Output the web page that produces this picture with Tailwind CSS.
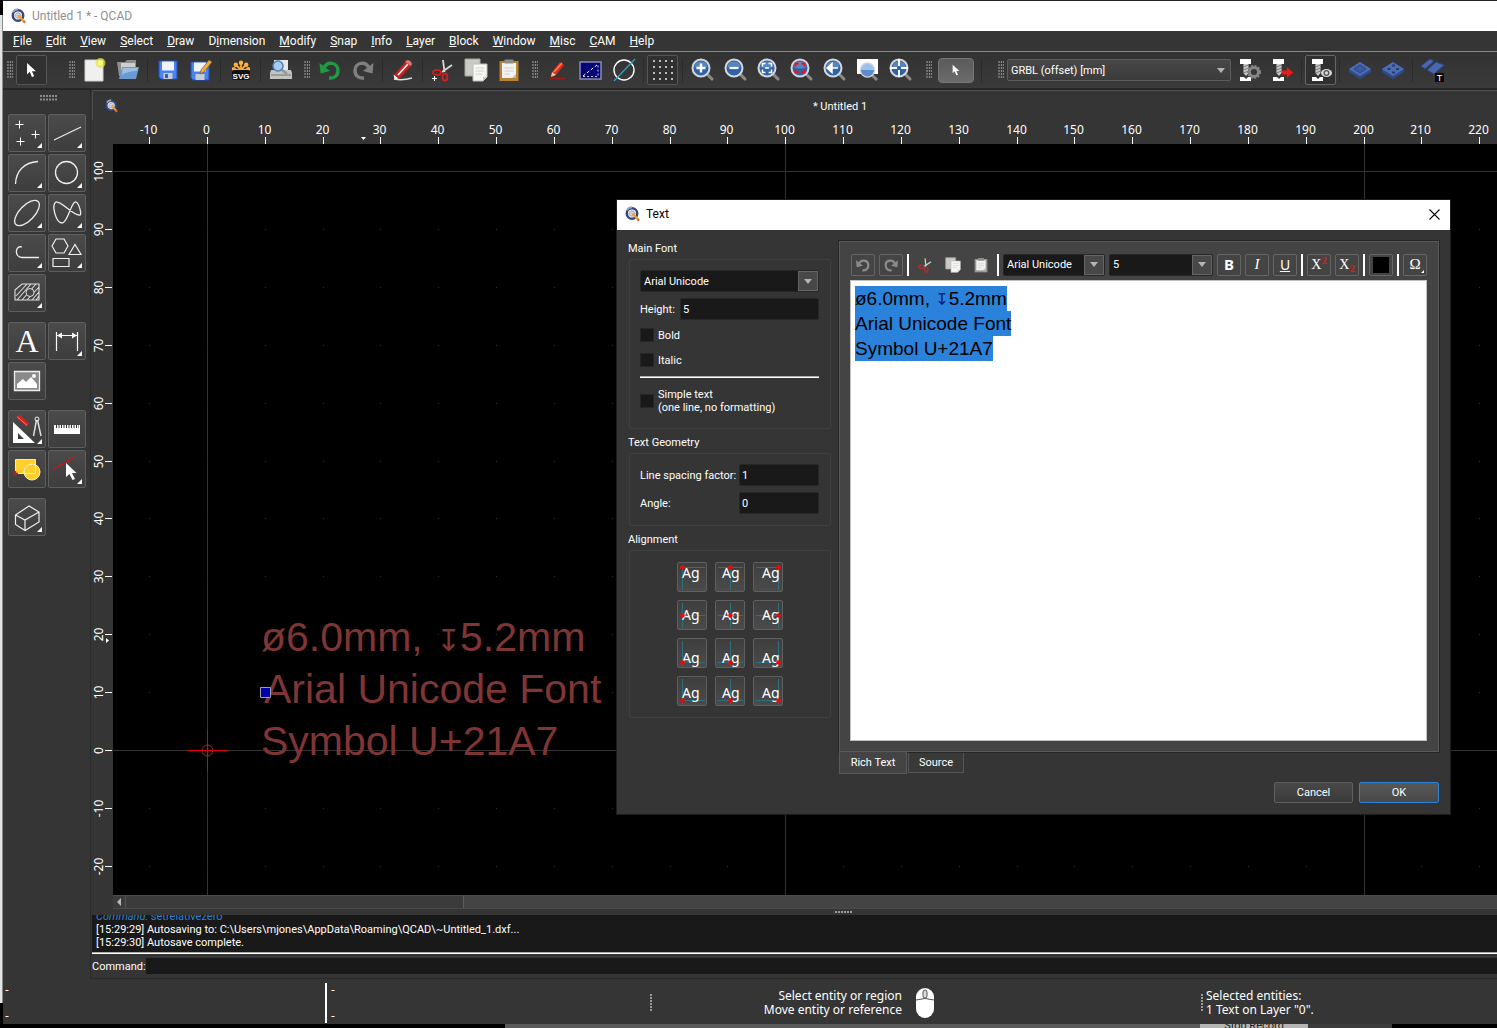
<!DOCTYPE html>
<html lang="en">
  <head>
    <meta charset="UTF-8" />
    <meta name="viewport" content="width=device-width, initial-scale=1.0" />
    <title>Untitled 1 * - QCAD</title>
    <script src="https://cdn.jsdelivr.net/npm/@tailwindcss/browser@4"></script>
  </head>
  <body class="bg-black">
    <!-- shared icon parts -->
    <svg class="hidden">
      <symbol id="logo" viewBox="0 0 16 16">
        <circle cx="7" cy="7.5" r="5.3" fill="#e8e8ee" stroke="#34477f" stroke-width="2.4" />
        <path d="M2 4A6.2 6.2 0 0 1 7 1.3" stroke="#9aa5c8" stroke-width="2" fill="none" />
        <circle cx="7" cy="7.5" r="2.6" fill="none" stroke="#a9a9b5" />
        <path d="M7 3v9M3 7.500h8" stroke="#b9b9c2" stroke-width=".7" />
        <path d="M7.500 7.500l5.500 6" stroke="#f0a030" stroke-width="2.300" />
        <path d="M12.500 13l1.500 1.600" stroke="#d8603a" stroke-width="2.300" />
      </symbol>
      <symbol id="grip" viewBox="0 0 6 18">
        <path d="M1 0v18M3.500 0v18M5.800 0v18" stroke="#8b8b8b" stroke-width="1.300" stroke-dasharray="2 1" />
      </symbol>
      <symbol id="lens" viewBox="0 0 24 24">
        <path d="M16 16l5 5" stroke="#8a8a86" stroke-width="3" stroke-linecap="round" />
        <circle cx="10" cy="10" r="8.500" fill="#2f63a8" stroke="#d4d8da" stroke-width="2" />
        <path d="M3.500 9a6.600 6.600 0 0 1 13 0q-6.500 3-13 0z" fill="#7ba3d2" opacity=".55" />
      </symbol>
      <symbol id="cursor" viewBox="0 0 12 18">
        <path d="M1 1v13l3-3 2.500 6 2.500-1-2.500-5.500h4.500z" fill="#fff" />
      </symbol>
      <symbol id="corner" viewBox="0 0 6 6"><path d="M6 0v6H0z" fill="#fff" /></symbol>
      <symbol id="undo" viewBox="0 0 24 24">
        <path d="M6 10C9 3 20 4 20 12.500C20 18 16 20.500 11 20" fill="none" stroke="currentColor" stroke-width="3.400" />
        <path d="M1.500 5l1 10.500 9.500-2.500z" fill="currentColor" />
      </symbol>
      <symbol id="cut" viewBox="0 0 24 24">
        <path d="M12 2l1.500 12M21 7l-10 7" stroke="#d8d8d8" stroke-width="1.800" />
        <ellipse cx="6" cy="14.500" rx="4" ry="2.300" fill="none" stroke="#d3201f" stroke-width="1.800" />
        <ellipse cx="14" cy="19" rx="2.400" ry="3.600" fill="none" stroke="#d3201f" stroke-width="1.800" />
      </symbol>
      <symbol id="copy" viewBox="0 0 24 24">
        <path d="M1 1h15v17H1z" fill="#c9c9c6" stroke="#a5a5a2" />
        <path d="M9 6h14v13l-4 4H9z" fill="#f7f7f5" stroke="#bdbdb9" />
        <path d="M11.500 10h9M11.500 13h9M11.500 16h7" stroke="#d0d0cc" />
        <path d="M19 23v-4h4z" fill="#c8c8c4" />
      </symbol>
      <symbol id="paste" viewBox="0 0 24 24">
        <path d="M2.500 3h19v20h-19z" fill="currentColor" />
        <path d="M5 5h14v15H5z" fill="#f2f2f0" />
        <path d="M7.500 1.500h9v4h-9z" fill="#8b8d86" />
        <path d="M7.500 10h9M7.500 13h9M7.500 16h5" stroke="#cfcfcb" />
        <path d="M19 20h-4l4-4z" fill="#b9b9b4" />
      </symbol>
      <symbol id="mill" viewBox="0 0 24 24">
        <path d="M3 1h11v5H3z" fill="#fff" />
        <path d="M6.500 6h5v9l-2.500 3-2.500-3z" fill="#c9c9c9" />
        <path d="M6.500 9l5-2M6.500 12l5-2M6.500 15l5-2" stroke="#777" />
        <path d="M3 19h4l2 2 2-2h3v4H3z" fill="#fff" />
      </symbol>
      <symbol id="slab" viewBox="0 0 24 24">
        <path d="M1 11l11-7 11 7v3l-11 7-11-7z" fill="#2d4b8c" />
        <path d="M1 11l11-7 11 7-11 7z" fill="#4c6cb4" />
      </symbol>
      <symbol id="down" viewBox="0 0 8 5"><path d="M0 0h8L4 5z" fill="#b4b4b4" /></symbol>
    </svg>

    <div class="relative flex h-screen w-full overflow-hidden bg-black font-[Roboto,'Noto_Sans',sans-serif] text-[11px] leading-[13px] text-white">
      <!-- sliver of the window behind -->
      <div class="mt-[15px] mb-[25px] w-[3px] shrink-0 border-r border-[#8c8c8c] bg-[#e4e4e4]"></div>

      <div class="flex min-w-0 flex-1 flex-col border-t border-[#222] bg-[#353535]">
        <header class="flex h-[30px] shrink-0 items-center gap-[5px] bg-white pl-2 text-[12px] text-[#8f8f8f]">
          <svg class="size-4"><use href="#logo" /></svg>
          <h1>Untitled 1 * - QCAD</h1>
        </header>

        <nav id="menu" class="flex h-[21px] shrink-0 items-center gap-[14px] border-b border-[#8a8a8a] pl-[10px] text-[12px] whitespace-nowrap">
          <button><u>F</u>ile</button>
          <button><u>E</u>dit</button>
          <button><u>V</u>iew</button>
          <button><u>S</u>elect</button>
          <button><u>D</u>raw</button>
          <button>D<u>i</u>mension</button>
          <button><u>M</u>odify</button>
          <button><u>S</u>nap</button>
          <button><u>I</u>nfo</button>
          <button><u>L</u>ayer</button>
          <button><u>B</u>lock</button>
          <button><u>W</u>indow</button>
          <button><u>M</u>isc</button>
          <button><u>C</u>AM</button>
          <button><u>H</u>elp</button>
        </nav>

        <!-- toolbars -->
        <div class="flex h-[38px] shrink-0 items-center border-b-2 border-[#262626] bg-linear-to-b from-[#323232] to-[#3a3a3a] [&_button]:flex [&_button]:shrink-0 [&_button]:items-center [&_button]:justify-center">
          <div class="flex items-center">
            <svg class="mr-[3px] ml-1 h-[18px] w-[6px]"><use href="#grip" /></svg>
            <button aria-label="Reset" class="h-[30px] w-[31px] rounded-xs border border-[#555] bg-[#303030]"><svg class="h-4 w-[11px]"><use href="#cursor" /></svg></button>
          </div>
          <div class="ml-[22px] flex items-center">
            <svg class="mr-[3px] h-[18px] w-[6px]"><use href="#grip" /></svg>
            <button aria-label="New" class="w-[33px]">
              <svg class="size-6" viewBox="0 0 24 24"><path d="M2 2h18v21H2z" fill="#f0f0ee" stroke="#cfcfcb" /><circle cx="17.500" cy="5" r="5" fill="#e9e53a" opacity=".7" /><circle cx="17.500" cy="5" r="2.500" fill="#ffff8a" /></svg>
            </button>
            <button aria-label="Open" class="w-[33px]">
              <svg class="size-6" viewBox="0 0 24 24"><path d="M1 4h8l2-2h9v16H3z" fill="#8d8f8a" /><path d="M5 5h14v9H5z" fill="#cfcfcc" /><path d="M6 9h17l-3 12H3z" fill="#6a9bd0" /><path d="M6.500 10h15.500l-1 3q-9 0-15 4z" fill="#9bbfe4" /></svg>
            </button>
            <span class="mx-[3px] h-6 w-px bg-[#2b2b2b]"></span>
            <button aria-label="Save" class="w-[33px]">
              <svg class="size-5" viewBox="0 0 20 20"><path d="M1 1h18v18H3l-2-2z" fill="#4a83ea" stroke="#1f4fc4" /><path d="M4 1.500h12v9H4z" fill="#eef3fc" /><path d="M5.500 13h9v6h-9z" fill="#c7cdd8" /><path d="M7 14h3v4H7z" fill="#3060c0" /></svg>
            </button>
            <button aria-label="Save As" class="w-[33px]">
              <svg class="size-[22px]" viewBox="0 0 22 22"><path d="M1 3h18v18H3l-2-2z" fill="#4a83ea" stroke="#1f4fc4" /><path d="M4 3.500h12v9H4z" fill="#eef3fc" /><path d="M5.500 15h9v6h-9z" fill="#c7cdd8" /><path d="M10 15l1-4 8-10 3 2-8 10z" fill="#f0b040" stroke="#7b5a20" stroke-width=".7" /></svg>
            </button>
            <span class="mx-[3px] h-6 w-px bg-[#2b2b2b]"></span>
            <button aria-label="SVG Export" class="w-[33px]">
              <svg class="size-5" viewBox="0 0 20 20"><path d="M10 10V3M10 10L5 5M10 10l5-5M10 10H3M10 10h7" stroke="#ffa62b" stroke-width="1.800" /><g fill="#ffb13b"><circle cx="10" cy="2.800" r="2.200" /><circle cx="4.800" cy="4.800" r="2.200" /><circle cx="15.200" cy="4.800" r="2.200" /><circle cx="2.800" cy="9" r="2" /><circle cx="17.200" cy="9" r="2" /></g><rect x="1" y="10" width="18" height="10" rx="2" fill="#111" /><text x="10" y="18.500" text-anchor="middle" class="fill-white font-['Liberation_Sans',sans-serif] text-[8px] font-bold">SVG</text></svg>
            </button>
            <span class="mx-[3px] h-6 w-px bg-[#2b2b2b]"></span>
            <button aria-label="Print Preview" class="w-[33px]">
              <svg class="size-6" viewBox="0 0 24 24"><path d="M5 2h14v10H5z" fill="#e6e6e4" /><path d="M2 12h20l1 3v6H1v-6z" fill="#c3c3c0" /><path d="M2 17h20" stroke="#777" /><path d="M12 11l6 5" stroke="#999" stroke-width="2.500" /><circle cx="9" cy="8" r="5" fill="#a9cdf0" stroke="#4a82bd" stroke-width="1.500" /></svg>
            </button>
          </div>
          <div class="ml-[7px] flex items-center">
            <svg class="mr-[3px] h-[18px] w-[6px]"><use href="#grip" /></svg>
            <button aria-label="Undo" class="w-[33px] text-[#219a45]"><svg class="size-6"><use href="#undo" /></svg></button>
            <button aria-label="Redo" class="w-[33px] text-[#808080]"><svg class="size-6 -scale-x-100"><use href="#undo" /></svg></button>
            <span class="mx-[3px] h-6 w-px bg-[#2b2b2b]"></span>
            <button aria-label="Delete" class="w-[33px]">
              <svg class="size-6" viewBox="0 0 24 24"><path d="M3 21q8 2 18-1" stroke="#ddd" stroke-width="1.500" fill="none" /><path d="M3 17L14 4l6 4-11 12-5 1z" fill="#c52020" /><path d="M7 17L17 6" stroke="#fff" stroke-width="1.600" /><path d="M2.500 16.500l5 4-4 1z" fill="#eee" /><path d="M14 4l2-2q4 0 5 4l-1 2z" fill="#e87070" /></svg>
            </button>
            <span class="mx-[3px] h-6 w-px bg-[#2b2b2b]"></span>
            <button aria-label="Cut" class="w-[33px]"><svg class="size-6" viewBox="0 0 24 24"><use href="#cut" /><path d="M3.500 18v5M1 20.500h5" stroke="#fff" /></svg></button>
            <button aria-label="Copy" class="w-[33px]"><svg class="size-6"><use href="#copy" /></svg></button>
            <button aria-label="Paste" class="w-[33px] text-[#b98432]"><svg class="size-6"><use href="#paste" /></svg></button>
          </div>
          <div class="ml-[7px] flex items-center">
            <svg class="mr-[3px] h-[18px] w-[6px]"><use href="#grip" /></svg>
            <button aria-label="Pen" class="w-[33px]">
              <svg class="size-5" viewBox="0 0 20 20"><path d="M2 18.500h15" stroke="#a81818" stroke-width="1.500" /><path d="M4 12L12 2l4 3-8 10-5 2z" fill="#e02c1c" /><path d="M6 12l8-9" stroke="#f78a5c" stroke-width="1.300" /><path d="M4 12l4 3-5 2z" fill="#f0c490" /></svg>
            </button>
            <button aria-label="Screen Based Linetypes" class="w-[33px]">
              <svg class="h-[19px] w-[23px]" viewBox="0 0 23 19"><path d="M1 1h21v17H1z" fill="#05057c" stroke="#8a8ab8" stroke-width="1.500" /><path d="M4 15L18 4" stroke="#fff" stroke-dasharray="3 2" /><path d="M4 15.500h15V4" fill="none" stroke="#ccc" stroke-dasharray="2 2" /></svg>
            </button>
            <button aria-label="Draft Mode" class="w-[33px]">
              <svg class="size-6" viewBox="0 0 24 24"><circle cx="12" cy="12" r="10" fill="none" stroke="#fff" stroke-width="1.400" /><path d="M2 23L23 1" stroke="#2ca5c4" stroke-width="1.200" /></svg>
            </button>
            <span class="mx-[3px] h-6 w-px bg-[#2b2b2b]"></span>
            <button aria-label="Grid" class="h-[30px] w-[31px] rounded-xs border border-[#555] bg-[#303030]">
              <svg class="size-[22px]" viewBox="0 0 22 22"><path d="M1 2h21M1 8h21M1 14h21M1 20h21" stroke="#bbb" stroke-width="2" stroke-dasharray="2 4" /></svg>
            </button>
            <span class="mr-[3px] ml-1 h-6 w-px bg-[#2b2b2b]"></span>
            <button aria-label="Zoom In" class="w-[33px]"><svg class="size-6" viewBox="0 0 24 24"><use href="#lens" /><path d="M10 5.500v9M5.500 10h9" stroke="#fff" stroke-width="2.400" /></svg></button>
            <button aria-label="Zoom Out" class="w-[33px]"><svg class="size-6" viewBox="0 0 24 24"><use href="#lens" /><path d="M5.500 10h9" stroke="#fff" stroke-width="2.200" /></svg></button>
            <button aria-label="Auto Zoom" class="w-[33px]"><svg class="size-6" viewBox="0 0 24 24"><use href="#lens" /><path d="M5.500 8.500v-3h3M11.500 5.500h3v3M14.500 11.500v3h-3M8.500 14.500h-3v-3M8 10h4" fill="none" stroke="#fff" stroke-width="1.500" /></svg></button>
            <button aria-label="Zoom to Selection" class="w-[33px]"><svg class="size-6" viewBox="0 0 24 24"><use href="#lens" /><path d="M5.500 8.500v-3h3M11.500 5.500h3v3M14.500 11.500v3h-3M8.500 14.500h-3v-3" fill="none" stroke="#f01020" stroke-width="2" /></svg></button>
            <button aria-label="Previous View" class="w-[33px]"><svg class="size-6" viewBox="0 0 24 24"><use href="#lens" /><path d="M4 10l5-4.500v9zM8 10h7" fill="#fff" stroke="#fff" stroke-width="1.500" /></svg></button>
            <button aria-label="Window Zoom" class="w-[33px]"><svg class="size-6" viewBox="0 0 24 24"><path d="M1 1h21v15H1z" fill="#fff" /><path d="M16 17l5 5" stroke="#8a8a86" stroke-width="3" /><circle cx="11.500" cy="12" r="7" fill="#9cc1ea" stroke="#d0d4d8" stroke-width="1.500" /><path d="M5 12h13a6.500 6.500 0 0 1-13 0z" fill="#5b8dcb" /></svg></button>
            <button aria-label="Pan" class="w-[33px]"><svg class="size-6" viewBox="0 0 24 24"><use href="#lens" /><path d="M10 1v18M1 10h18" stroke="#fff" stroke-width="2" /><path d="M8 10h4M10 8v4" stroke="#2f63a8" stroke-width="2.200" /></svg></button>
          </div>
          <div class="ml-[9px] flex items-center">
            <svg class="mr-[6px] h-[18px] w-[6px]"><use href="#grip" /></svg>
            <button aria-label="Selection" class="h-[25px] w-9 rounded border border-[#777] bg-linear-to-b from-[#5a5a5a] to-[#6c6c6c]"><svg class="h-3 w-2"><use href="#cursor" /></svg></button>
            <span class="mr-[3px] ml-[7px] h-6 w-px bg-[#2b2b2b]"></span>
          </div>
          <div class="ml-[13px] flex items-center">
            <svg class="mr-[3px] h-[18px] w-[6px]"><use href="#grip" /></svg>
            <div class="mr-px flex h-[22px] w-[224px] items-center rounded-xs border border-[#5c5c5c] bg-linear-to-b from-[#484848] to-[#3b3b3b] pr-[5px]">
              <select aria-label="CAM configuration" class="min-w-0 flex-1 appearance-none pl-[3px] outline-none"><option>GRBL (offset) [mm]</option></select>
              <svg class="h-[5px] w-2"><use href="#down" /></svg>
            </div>
            <button aria-label="CAM Settings" class="w-[33px]"><svg class="size-6" viewBox="0 0 24 24"><use href="#mill" /><circle cx="17" cy="14" r="4.500" fill="none" stroke="#858585" stroke-width="3" /><circle cx="17" cy="14" r="6" fill="none" stroke="#858585" stroke-width="2" stroke-dasharray="2 1.500" /></svg></button>
            <button aria-label="CAM Export" class="w-[33px]"><svg class="size-6" viewBox="0 0 24 24"><use href="#mill" /><path d="M12 12.500h5v-3.500l6 5.500-6 5.500v-3.500h-5z" fill="#f01818" /></svg></button>
            <span class="mx-[3px] h-6 w-px bg-[#2b2b2b]"></span>
            <button aria-label="CAM Simulation" class="h-[30px] w-[31px] rounded-xs border border-[#666] bg-[#303030]"><svg class="size-6" viewBox="0 0 24 24"><use href="#mill" /><ellipse cx="17.500" cy="15" rx="5.500" ry="4" fill="#d8d8d8" /><circle cx="17.500" cy="15" r="2.300" fill="none" stroke="#555" stroke-width="1.300" /></svg></button>
            <span class="mx-[3px] h-6 w-px bg-[#2b2b2b]"></span>
            <button aria-label="Pocket" class="w-[33px]"><svg class="size-6" viewBox="0 0 24 24"><use href="#slab" /><path d="M6 11l6-4 6 4-6 4z" fill="#3c5ba2" stroke="#27437f" /></svg></button>
            <button aria-label="Drill" class="w-[33px]"><svg class="size-6" viewBox="0 0 24 24"><use href="#slab" /><path d="M11 7.500h3M6.500 11h3M15 11h3M11 14.500h3" stroke="#263c74" stroke-width="2" /></svg></button>
            <span class="mx-[3px] h-6 w-px bg-[#2b2b2b]"></span>
            <button aria-label="Toolpath Text" class="w-[33px]"><svg class="size-6" viewBox="0 0 24 24"><path d="M0 8L9 1l4 2-9 8zM6 12l9-8 8 3-10 9z" fill="#4a68b0" stroke="#2c4686" /><path d="M14 15h9v9h-9z" fill="#0a0a0a" /><text x="18.500" y="22.500" text-anchor="middle" class="fill-white font-['Liberation_Sans',sans-serif] text-[9px]">T</text></svg></button>
          </div>
        </div>

        <div class="flex min-h-0 flex-1">
          <!-- tool palette -->
          <aside class="flex w-[88px] shrink-0 flex-col gap-[10px] border-r border-[#2a2a2a] pl-[5px] [&_button]:relative [&_button]:flex [&_button]:size-[38px] [&_button]:items-center [&_button]:justify-center [&_button]:rounded-xs [&_button]:border [&_button]:border-[#5e5e5e] [&_button]:bg-linear-to-b [&_button]:from-[#4b4b4b] [&_button]:to-[#3d3d3d]">
            <svg class="mt-[5px] mb-[3px] h-[6px] w-[18px] self-center" viewBox="0 0 18 6"><path d="M0 1h18M0 4.500h18" stroke="#8b8b8b" stroke-width="2" stroke-dasharray="2 1" /></svg>
            <div class="grid w-[78px] grid-cols-2 gap-[2px]">
              <button aria-label="Point Tools"><svg class="size-8" viewBox="0 0 32 32"><path d="M4.500 7.500h8M8.500 3.500v8M20.500 17.500h8M24.500 13.500v8M5.500 24.500h8M9.500 20.500v8" stroke="#fff" /></svg><svg class="absolute right-[3px] bottom-[3px] size-[5px]"><use href="#corner" /></svg></button>
              <button aria-label="Line Tools"><svg class="size-8" viewBox="0 0 32 32"><path d="M3 23L30 10" stroke="#eee" stroke-width="1.200" /></svg><svg class="absolute right-[3px] bottom-[3px] size-[5px]"><use href="#corner" /></svg></button>
              <button aria-label="Arc Tools"><svg class="size-8" viewBox="0 0 32 32"><path d="M4.500 27C5 14 13 5.500 27 4.500" fill="none" stroke="#eee" stroke-width="1.300" /></svg><svg class="absolute right-[3px] bottom-[3px] size-[5px]"><use href="#corner" /></svg></button>
              <button aria-label="Circle Tools"><svg class="size-8" viewBox="0 0 32 32"><circle cx="15.500" cy="15.500" r="11" fill="none" stroke="#eee" stroke-width="1.300" /></svg><svg class="absolute right-[3px] bottom-[3px] size-[5px]"><use href="#corner" /></svg></button>
              <button aria-label="Ellipse Tools"><svg class="size-8" viewBox="0 0 32 32"><ellipse cx="16" cy="16" rx="16" ry="7.500" transform="rotate(-46 16 16)" fill="none" stroke="#eee" stroke-width="1.300" /></svg><svg class="absolute right-[3px] bottom-[3px] size-[5px]"><use href="#corner" /></svg></button>
              <button aria-label="Spline Tools"><svg class="size-8" viewBox="0 0 32 32"><path d="M5 5C0 8 5 26 11 26C17 26 20 4 25 5C28 6 32 20 28 18C22 18 10 4 5 5z" fill="none" stroke="#eee" stroke-width="1.300" /></svg><svg class="absolute right-[3px] bottom-[3px] size-[5px]"><use href="#corner" /></svg></button>
              <button aria-label="Polyline Tools"><svg class="size-8" viewBox="0 0 32 32"><path d="M11 10C4 8 3 20 11 20.500H28" fill="none" stroke="#eee" stroke-width="1.300" /></svg><svg class="absolute right-[3px] bottom-[3px] size-[5px]"><use href="#corner" /></svg></button>
              <button aria-label="Shape Tools"><svg class="size-8" viewBox="0 0 32 32"><path d="M5 2h8l4 7-4 7H5L1 9zM18 17.500l6-10 6 10zM2 21.500h16v8H2z" fill="none" stroke="#eee" stroke-width="1.200" /></svg><svg class="absolute right-[3px] bottom-[3px] size-[5px]"><use href="#corner" /></svg></button>
              <button aria-label="Hatch"><svg class="size-8" viewBox="0 0 32 32"><path d="M4 13l7-6h17v16H4zM5 19L16 7M6 23L20 7M11 23L25 7M16 23L28 10M21 23l7-8M25 23l3-4" fill="none" stroke="#ddd" stroke-width="1.100" /><circle cx="19" cy="15.500" r="4" fill="#454545" stroke="#ddd" /></svg><svg class="absolute right-[3px] bottom-[3px] size-[5px]"><use href="#corner" /></svg></button>
            </div>
            <div class="grid w-[78px] grid-cols-2 gap-[2px]">
              <button aria-label="Text" class="font-['Liberation_Serif',serif] text-[32px] leading-8">A</button>
              <button aria-label="Dimension Tools"><svg class="size-8" viewBox="0 0 32 32"><path d="M5.500 7v19M26.500 7v19M6 10.500h20" stroke="#fff" stroke-width="1.200" /><path d="M6 10.500l5-3v6zM26 10.500l-5-3v6z" fill="#fff" /></svg><svg class="absolute right-[3px] bottom-[3px] size-[5px]"><use href="#corner" /></svg></button>
              <button aria-label="Insert Bitmap"><svg class="size-8" viewBox="0 0 32 32"><path d="M3.500 6.500h25v19h-25z" fill="#8a8a8a" stroke="#eee" stroke-width="1.300" /><path d="M6 23v-4l6-5 3 3 5-5 6 7v4z" fill="#fff" /><circle cx="23" cy="11" r="2" fill="#fff" /></svg></button>
            </div>
            <div class="grid w-[78px] grid-cols-2 gap-[2px]">
              <button aria-label="Modify Tools"><svg class="size-8" viewBox="0 0 32 32"><path d="M2 9v21h22zM7 20l6 6H7z" fill="#fff" fill-rule="evenodd" /><path d="M7 3l10 9" stroke="#d82020" stroke-width="4" /><path d="M6 3.500l10 9" stroke="#f39080" stroke-width=".8" /><path d="M25.500 7l-3 16M26.500 7l3.500 16" stroke="#ddd" stroke-width="1.500" /><circle cx="26" cy="6" r="2" fill="none" stroke="#eee" /></svg><svg class="absolute right-[3px] bottom-[3px] size-[5px]"><use href="#corner" /></svg></button>
              <button aria-label="Measure Tools"><svg class="size-8" viewBox="0 0 32 32"><path d="M3 12h26v9H3z" fill="#fff" /><path d="M5 13.500h23" stroke="#333" stroke-width="3" stroke-dasharray="1 1.500" /></svg></button>
              <button aria-label="Block Tools"><svg class="size-8" viewBox="0 0 32 32"><path d="M4.500 6.500h20v14h-20z" fill="#ffcf2e" stroke="#ffe9a0" /><circle cx="21" cy="19" r="8" fill="#ffcf2e" stroke="#fff0b8" /><path d="M24.500 11v9.500H13" fill="none" stroke="#fff0b8" /><path d="M4.500 18v5M2 20.500h5" stroke="#f00" stroke-width="1.500" /></svg></button>
              <button aria-label="Snap Tools"><svg class="size-8" viewBox="0 0 32 32"><path d="M3 16L24 4" stroke="#e01010" stroke-width="1.300" /><path d="M15 10v14l3.500-3 3 6 2.500-1-3-6h4.500z" fill="#fff" /></svg><svg class="absolute right-[3px] bottom-[3px] size-[5px]"><use href="#corner" /></svg></button>
            </div>
            <div class="grid w-[78px] grid-cols-2 gap-[2px]">
              <button aria-label="Projection Tools"><svg class="size-8" viewBox="0 0 32 32"><path d="M4.500 14L18 5l10 6v10L14 29.500l-9.500-6zM4.500 14l9.500 5 14-8M14 19v10.500" fill="none" stroke="#eee" stroke-width="1.200" /></svg><svg class="absolute right-[3px] bottom-[3px] size-[5px]"><use href="#corner" /></svg></button>
            </div>
          </aside>

          <div class="flex min-w-0 flex-1 flex-col">
            <!-- document tab -->
            <div class="ml-px flex h-[30px] shrink-0 items-center rounded-tl-xs border-t border-l border-[#505050]">
              <svg class="ml-3 size-[14px]"><use href="#logo" /></svg>
              <h2 class="flex-1 pt-px pl-16 text-center">* Untitled 1</h2>
            </div>
            <div class="flex h-6 shrink-0 pl-[22px]">
              <svg id="ruler-x" class="h-6 min-w-0 flex-1 overflow-visible font-['Noto_Sans',sans-serif] text-[12px]"></svg>
            </div>
            <div class="flex min-h-0 flex-1">
              <svg id="ruler-y" class="h-full w-[22px] shrink-0 font-['Noto_Sans',sans-serif] text-[12px]"></svg>
              <svg id="canvas" class="h-full min-w-0 flex-1 bg-black font-['Liberation_Sans',Arial,sans-serif] text-[41px]">
                <g id="grid"></g>
                <g fill="#7f3535">
                  <text x="148" y="507">ø6.0mm,</text>
                  <text x="323" y="507" class="font-['DejaVu_Sans',sans-serif] text-[30px]">↧</text>
                  <text x="347" y="507">5.2mm</text>
                  <text x="151" y="559">Arial Unicode Font</text>
                  <text x="148" y="611">Symbol U+21A7</text>
                </g>
                <path d="M147.500 543.500h10v10h-10z" fill="#0000a8" stroke="#a0a0a0" />
                <path d="M74 606.500h41M94.500 586v42" stroke="#e00000" />
                <circle cx="94.500" cy="606.500" r="5.500" fill="none" stroke="#c02020" />
              </svg>
            </div>
            <div class="ml-[22px] flex h-[14px] shrink-0 border-y border-[#4a4a4a] bg-[#3b3b3b]">
              <button aria-label="Scroll left" class="flex w-[13px] items-center justify-center border-r border-[#555]"><svg class="h-2 w-1" viewBox="0 0 4 8"><path d="M4 0v8L0 4z" fill="#bbb" /></svg></button>
              <span class="w-[337px] shrink-0"></span>
              <span class="flex-1 border-l border-[#5e5e5e] bg-[#444]"></span>
            </div>
            <div class="flex h-[6px] shrink-0 items-center justify-center pl-[99px]">
              <svg class="h-[2px] w-[18px]" viewBox="0 0 18 2"><path d="M0 1h18" stroke="#9a9a9a" stroke-width="2" stroke-dasharray="2 1" /></svg>
            </div>

            <!-- command line -->
            <div class="ml-px flex h-[37px] shrink-0 flex-col justify-end overflow-hidden bg-[#191919] pb-[3px] pl-1">
              <p class="text-[#2a82da]"><i>Command:</i> setrelativezero</p>
              <p>[15:29:29] Autosaving to: C:\Users\mjones\AppData\Roaming\QCAD\~Untitled_1.dxf...</p>
              <p>[15:29:30] Autosave complete.</p>
            </div>
            <div class="ml-px h-[2px] shrink-0 border-t border-[#aaa] bg-white"></div>
            <div class="flex h-[25px] shrink-0 items-center border-b border-[#2a2a2a] pl-px">
              <label for="command" class="w-[54px]">Command:</label>
              <input id="command" class="h-4 min-w-0 flex-1 bg-[#191919] outline-none" />
            </div>
          </div>
        </div>

        <!-- status bar -->
        <footer class="flex h-[45px] shrink-0 items-center pt-[2px] font-['Noto_Sans',sans-serif] text-[12px] leading-[14px]">
          <div class="flex h-10 w-[322px] flex-col justify-between pl-[2px]"><span>-</span><span>-</span></div>
          <div class="flex h-10 w-[325px] flex-col justify-between border-l-2 border-white pl-1"><span>-</span><span>-</span></div>
          <svg class="h-[18px] w-[2px]" viewBox="0 0 2 18"><path d="M1 0v18" stroke="#999" stroke-width="2" stroke-dasharray="2 1" /></svg>
          <p class="w-[251px] pr-px text-right">Select entity or region<br />Move entity or reference</p>
          <svg class="ml-3 h-8 w-5" viewBox="0 0 20 32"><rect x="1" y="1" width="18" height="30" rx="9" fill="#fff" /><path d="M1 13q9-3 18 0" stroke="#555" fill="none" /><rect x="8" y="3" width="4" height="8" rx="2" fill="#ddd" stroke="#555" /></svg>
          <svg class="ml-[266px] h-[18px] w-[2px]" viewBox="0 0 2 18"><path d="M1 0v18" stroke="#999" stroke-width="2" stroke-dasharray="2 1" /></svg>
          <p class="pl-[3px]">Selected entities:<br />1 Text on Layer "0".</p>
        </footer>
        <div class="flex h-1 shrink-0 overflow-hidden bg-black leading-1">
          <span class="ml-[502px] w-[695px] bg-[#5a5a5a]"></span>
          <span class="w-[108px] bg-[#b5b5b5] text-center text-[#222]">Stop Record</span>
          <span class="w-[84px] bg-[#3c3c3c]"></span>
        </div>
      </div>

      <!-- text dialog -->
      <div role="dialog" aria-label="Text" class="absolute top-[200px] left-[617px] flex w-[833px] flex-col bg-[#353535] shadow-[0_0_0_1px_#1c1c1c]">
        <header class="flex h-[30px] items-center bg-white pr-[10px] pb-[2px] pl-2 text-[12px] text-black">
          <svg class="size-4"><use href="#logo" /></svg>
          <h2 class="ml-[5px] flex-1">Text</h2>
          <button aria-label="Close"><svg class="size-[11px]" viewBox="0 0 11 11"><path d="M.5.5l10 10M10.500.5l-10 10" stroke="#000" stroke-width="1.100" /></svg></button>
        </header>

        <div class="flex gap-2 pt-[11px] pr-[11px] pl-[11px]">
          <div class="flex w-[203px] shrink-0 flex-col">
            <h3 class="mt-px">Main Font</h3>
            <div class="mt-1 ml-px flex h-[170px] flex-col rounded-xs border border-[#404040] pt-[10px] pr-[11px] pl-[10px]">
              <div class="flex h-[22px] overflow-hidden rounded-xs border border-[#262626] bg-[#191919]">
                <select aria-label="Font" class="min-w-0 flex-1 appearance-none pl-[3px] outline-none"><option>Arial Unicode</option></select>
                <span class="flex w-5 items-center justify-center border border-[#666] bg-[#484848]"><svg class="h-[5px] w-2"><use href="#down" /></svg></span>
              </div>
              <div class="mt-[6px] flex items-center">
                <label for="height" class="flex-1">Height:</label>
                <input id="height" value="5" class="h-[22px] w-[139px] rounded-xs border border-[#262626] bg-[#191919] pl-[2px] outline-none" />
              </div>
              <label class="mt-2 flex items-center gap-1"><input type="checkbox" class="size-[14px] appearance-none border border-[#262626] bg-[#191919]" />Bold</label>
              <label class="mt-[11px] flex items-center gap-1"><input type="checkbox" class="size-[14px] appearance-none border border-[#262626] bg-[#191919]" />Italic</label>
              <hr class="mt-[9px] h-[2px] border-t border-[#aaa] bg-white" />
              <label class="mt-[10px] flex items-center gap-1"><input type="checkbox" class="size-[14px] appearance-none border border-[#262626] bg-[#191919]" /><span>Simple text<br />(one line, no formatting)</span></label>
            </div>
            <h3 class="mt-[7px]">Text Geometry</h3>
            <div class="mt-1 ml-px flex h-[73px] flex-col gap-[6px] rounded-xs border border-[#404040] pt-[10px] pr-[11px] pl-[10px]">
              <div class="flex items-center">
                <label for="spacing" class="flex-1 whitespace-nowrap">Line spacing factor:</label>
                <input id="spacing" value="1" class="h-[22px] w-20 rounded-xs border border-[#262626] bg-[#191919] pl-[2px] outline-none" />
              </div>
              <div class="flex items-center">
                <label for="angle" class="flex-1">Angle:</label>
                <input id="angle" value="0" class="h-[22px] w-20 rounded-xs border border-[#262626] bg-[#191919] pl-[2px] outline-none" />
              </div>
            </div>
            <h3 class="mt-[7px]">Alignment</h3>
            <div id="alignment" class="mt-1 ml-px grid h-[168px] grid-cols-[repeat(3,30px)] content-center justify-center gap-2 rounded-xs border border-[#404040]"></div>
          </div>

          <div class="flex min-w-0 flex-1 flex-col">
            <div class="flex flex-col border border-[#5a5a5a] bg-[#444] pt-[11px] pr-[11px] pb-[10px] pl-[10px] shadow-[0_0_0_1px_#262626]">
              <div class="flex h-[23px] items-center gap-1 pl-px [&_button]:flex [&_button]:h-[22px] [&_button]:w-6 [&_button]:items-center [&_button]:justify-center [&_button]:rounded-xs">
                <button aria-label="Undo" class="border border-[#666] text-[#8b8b8b]"><svg class="size-4"><use href="#undo" /></svg></button>
                <button aria-label="Redo" class="border border-[#666] text-[#8b8b8b]"><svg class="size-4 -scale-x-100"><use href="#undo" /></svg></button>
                <span class="h-[22px] w-[2px] bg-white"></span>
                <button aria-label="Cut"><svg class="size-4"><use href="#cut" /></svg></button>
                <button aria-label="Copy"><svg class="size-4"><use href="#copy" /></svg></button>
                <button aria-label="Paste" class="text-[#9a9a96]"><svg class="size-4"><use href="#paste" /></svg></button>
                <span class="h-[22px] w-[2px] bg-white"></span>
                <div class="flex h-[22px] w-[102px] overflow-hidden rounded-xs border border-[#262626] bg-[#191919]">
                  <select aria-label="Text font" class="min-w-0 flex-1 appearance-none pl-[3px] outline-none"><option>Arial Unicode</option></select>
                  <span class="flex w-5 items-center justify-center border border-[#666] bg-[#484848]"><svg class="h-[5px] w-2"><use href="#down" /></svg></span>
                </div>
                <div class="flex h-[22px] min-w-0 flex-1 overflow-hidden rounded-xs border border-[#262626] bg-[#191919]">
                  <select aria-label="Text size" class="min-w-0 flex-1 appearance-none pl-[3px] outline-none"><option>5</option></select>
                  <span class="flex w-5 items-center justify-center border border-[#666] bg-[#484848]"><svg class="h-[5px] w-2"><use href="#down" /></svg></span>
                </div>
                <button class="border border-[#666] font-['Noto_Sans',sans-serif] text-[15px] font-bold">B</button>
                <button class="border border-[#666] font-['Liberation_Serif',serif] text-[15px] italic">I</button>
                <button class="border border-[#666] font-['Noto_Sans',sans-serif] text-[14px] underline">U</button>
                <span class="h-[22px] w-[2px] bg-white"></span>
                <button class="border border-[#666] font-['Liberation_Serif',serif] text-[14px]"><span>X<sup class="text-[11px] font-bold text-[#f01010]">2</sup></span></button>
                <button class="border border-[#666] font-['Liberation_Serif',serif] text-[14px]"><span>X<sub class="text-[11px] font-bold text-[#f01010]">2</sub></span></button>
                <span class="h-[22px] w-[2px] bg-white"></span>
                <button aria-label="Text color" class="border border-[#666]"><span class="size-4 bg-black"></span></button>
                <span class="h-[22px] w-[2px] bg-white"></span>
                <button class="relative border border-[#666] font-['Liberation_Serif',serif] text-[15px]">Ω<svg class="absolute right-[2px] bottom-[2px] size-[3px]"><use href="#corner" /></svg></button>
              </div>
              <div contenteditable="true" role="textbox" aria-label="Rich text" class="mt-1 h-[461px] border border-[#c0c0c0] bg-white pt-[5px] pl-1 font-['Liberation_Sans',Arial,sans-serif] text-[19px] leading-[25px] text-black outline-none [&_span]:inline-block [&_span]:h-[25px] [&_span]:bg-[#2a82da]">
                <p class="h-[25px]"><span>ø6.0mm, <b class="font-['DejaVu_Sans',sans-serif] text-[16px] font-normal text-[#0a1a6a]">↧</b>5.2mm</span></p>
                <p class="h-[25px]"><span>Arial Unicode Font</span></p>
                <p class="h-[25px]"><span>Symbol U+21A7</span></p>
              </div>
            </div>
            <div role="tablist" class="flex items-start gap-px">
              <button role="tab" aria-selected="true" class="h-[22px] w-[68px] border-x border-b border-[#5a5a5a] bg-[#444]">Rich Text</button>
              <button role="tab" aria-selected="false" class="mt-px h-5 w-14 border-x border-b border-[#555] bg-[#393939]">Source</button>
            </div>
          </div>
        </div>

        <div class="flex justify-end gap-[6px] pt-2 pr-[11px] pb-[11px]">
          <button class="h-[21px] w-[79px] rounded-xs border border-[#606060] bg-linear-to-b from-[#484848] to-[#3b3b3b]">Cancel</button>
          <button class="h-[21px] w-20 rounded-xs border border-[#2a82da] bg-linear-to-b from-[#585858] to-[#484848]">OK</button>
        </div>
      </div>
    </div>

    <script>
      // Drawing origin and size of ten units, in pixels of the canvas
      const origin = { x: 94.5, y: 606.5 };
      const step = { x: 57.83, y: 57.9 };

      // Horizontal ruler
      let rulerX = "";
      for (let i = -1; i <= 22; i++) {
        const x = Math.floor(origin.x + i * step.x) + 0.5;
        rulerX += `<text x="${x - 1}" y="14" text-anchor="middle" fill="#fff">${i * 10}</text>`;
        rulerX += `<path d="M${x} 17v7" stroke="#fff"/>`;
      }
      rulerX += `<path d="M248 17h5l-2.500 3z" fill="#fff"/>`;
      document.getElementById("ruler-x").innerHTML = rulerX;

      // Vertical ruler
      let rulerY = "";
      for (let i = -2; i <= 10; i++) {
        const y = Math.floor(origin.y - i * step.y) + 0.5;
        rulerY += `<text transform="translate(12 ${y}) rotate(-90)" text-anchor="middle" fill="#fff">${i * 10}</text>`;
        rulerY += `<path d="M14 ${y}h7" stroke="#fff"/>`;
      }
      rulerY += `<path d="M15 494v5l3-2.500z" fill="#fff"/>`;
      document.getElementById("ruler-y").innerHTML = rulerY;

      // Grid lines every 100 units, dots every 10
      let grid = "";
      for (let i = -1; i <= 40; i++) {
        const x = Math.floor(origin.x + i * step.x) + 0.5;
        if (i % 10 === 0) grid += `<path d="M${x} 0v2000" stroke="#333"/>`;
        for (let j = -10; j <= 10; j++) {
          const y = Math.floor(origin.y - j * step.y) + 0.5;
          grid += `<path d="M${x - 0.5} ${y}h1" stroke="#2f2f18"/>`;
        }
      }
      for (let j = -10; j <= 10; j += 10) {
        const y = Math.floor(origin.y - j * step.y) + 0.5;
        grid += `<path d="M0 ${y}h4000" stroke="#333"/>`;
      }
      document.getElementById("grid").innerHTML = grid;

      // Alignment buttons
      const rows = [
        { name: "Top", line: 4.5, base: 15 },
        { name: "Middle", line: 14.5, base: 19 },
        { name: "Base", line: 23.5, base: 24 },
        { name: "Bottom", line: 23.5, base: 21 },
      ];
      const cols = [
        { name: "Left", line: 4.5, text: 4 },
        { name: "Center", line: 14.5, text: 6 },
        { name: "Right", line: 24.5, text: 8 },
      ];
      let buttons = "";
      rows.forEach((r) => {
        cols.forEach((c) => {
          buttons += `<button aria-label="${r.name} ${c.name}" class="size-[30px] rounded-xs border border-[#606060] bg-linear-to-b from-[#3e3e3e] to-[#4b4b4b]">
            <svg class="size-7" viewBox="0 0 28 28">
              <path d="M2 ${r.line}h25M${c.line} 2v25" stroke="#2c7080"/>
              <text x="${c.text}" y="${r.base}" fill="#fff" class="font-['Noto_Sans',sans-serif] text-[14px]">Ag</text>
              <circle cx="${c.line}" cy="${r.line}" r="2.2" fill="#f00"/>
            </svg></button>`;
        });
      });
      document.getElementById("alignment").innerHTML = buttons;
    </script>
  </body>
</html>
